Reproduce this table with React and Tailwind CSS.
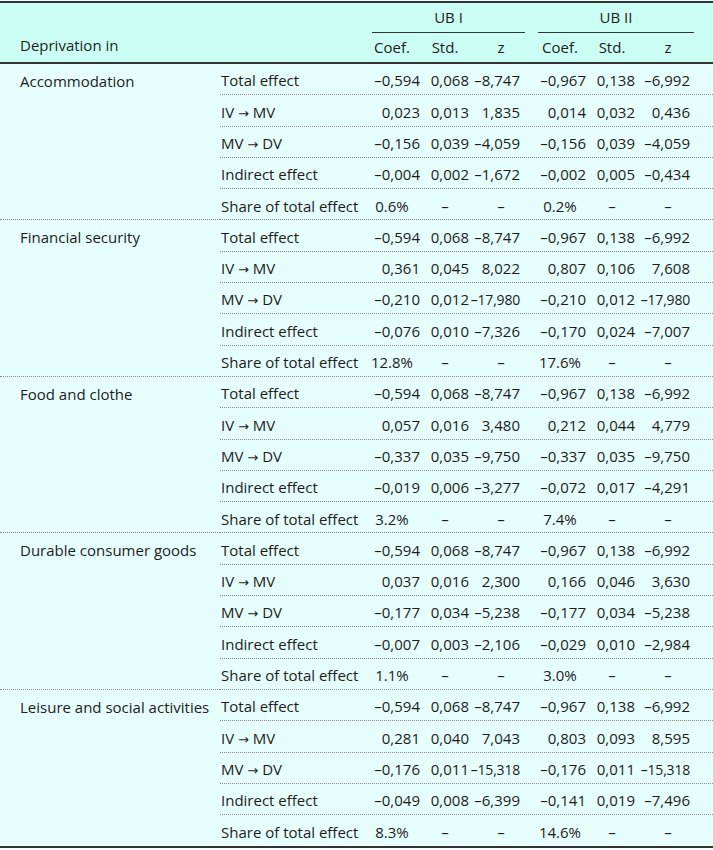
import React from 'react'

const groups = [
  {
    name: 'Accommodation',
    rows: [
      ['–0,594', '0,068', '–8,747', '–0,967', '0,138', '–6,992'],
      ['0,023', '0,013', '1,835', '0,014', '0,032', '0,436'],
      ['–0,156', '0,039', '–4,059', '–0,156', '0,039', '–4,059'],
      ['–0,004', '0,002', '–1,672', '–0,002', '0,005', '–0,434'],
    ],
    share: ['0.6%', '0.2%'],
  },
  {
    name: 'Financial security',
    rows: [
      ['–0,594', '0,068', '–8,747', '–0,967', '0,138', '–6,992'],
      ['0,361', '0,045', '8,022', '0,807', '0,106', '7,608'],
      ['–0,210', '0,012', '–17,980', '–0,210', '0,012', '–17,980'],
      ['–0,076', '0,010', '–7,326', '–0,170', '0,024', '–7,007'],
    ],
    share: ['12.8%', '17.6%'],
  },
  {
    name: 'Food and clothe',
    rows: [
      ['–0,594', '0,068', '–8,747', '–0,967', '0,138', '–6,992'],
      ['0,057', '0,016', '3,480', '0,212', '0,044', '4,779'],
      ['–0,337', '0,035', '–9,750', '–0,337', '0,035', '–9,750'],
      ['–0,019', '0,006', '–3,277', '–0,072', '0,017', '–4,291'],
    ],
    share: ['3.2%', '7.4%'],
  },
  {
    name: 'Durable consumer goods',
    rows: [
      ['–0,594', '0,068', '–8,747', '–0,967', '0,138', '–6,992'],
      ['0,037', '0,016', '2,300', '0,166', '0,046', '3,630'],
      ['–0,177', '0,034', '–5,238', '–0,177', '0,034', '–5,238'],
      ['–0,007', '0,003', '–2,106', '–0,029', '0,010', '–2,984'],
    ],
    share: ['1.1%', '3.0%'],
  },
  {
    name: 'Leisure and social activities',
    rows: [
      ['–0,594', '0,068', '–8,747', '–0,967', '0,138', '–6,992'],
      ['0,281', '0,040', '7,043', '0,803', '0,093', '8,595'],
      ['–0,176', '0,011', '–15,318', '–0,176', '0,011', '–15,318'],
      ['–0,049', '0,008', '–6,399', '–0,141', '0,019', '–7,496'],
    ],
    share: ['8.3%', '14.6%'],
  },
]

const Arrow = () => <span style={{ fontFamily: '"DejaVu Sans", sans-serif' }} className="text-[13px]">→</span>

const labels = [
  'Total effect',
  <>IV <Arrow /> MV</>,
  <>MV <Arrow /> DV</>,
  'Indirect effect',
]

// right padding per numeric column so the digits line up like the reference
const numPad = [
  'text-right whitespace-nowrap',
  'text-right whitespace-nowrap pr-px',
  'text-right whitespace-nowrap pr-[12px]',
  'text-right whitespace-nowrap pr-[2px]',
  'text-right whitespace-nowrap pr-px',
  'text-right whitespace-nowrap pr-[10px]',
]

const grid = 'grid grid-cols-[144px_56px_50px_62px_56px_48px_64px_13px] items-center pt-[3px]'
const rowH = 'h-[31.3px]'
const dotted = 'border-b border-dotted border-[#8c8c8c]'

function Num({ v }) {
  // the widest z values get a touch narrower so they keep clear of the Std column
  if (v.length > 6) return <span className="text-[14px] tracking-[-0.2px]">{v}</span>
  return v
}

function Row({ label, cells, last }) {
  return (
    <div className={`${grid} ${rowH} ${last ? '' : dotted}`}>
      <div className="pl-px whitespace-nowrap">{label}</div>
      {cells.map((c, i) => (
        <div key={i} className={numPad[i]}><Num v={c} /></div>
      ))}
      <div />
    </div>
  )
}

function ShareRow({ share, last }) {
  return (
    <div className={`${grid} ${rowH} ${last ? '' : dotted}`}>
      <div className="pl-px whitespace-nowrap">Share of total effect</div>
      <div className="text-center">{share[0]}</div>
      <div className="text-center">–</div>
      <div className="text-center">–</div>
      <div className="text-center">{share[1]}</div>
      <div className="text-center">–</div>
      <div className="text-center">–</div>
      <div />
    </div>
  )
}

export default function App() {
  return (
    <div className="w-[713px] bg-[#e6fffc] pt-px text-[15px] text-[#1c1c1c]" style={{ fontFamily: '"Open Sans", "Noto Sans", sans-serif' }}>
      <div className="border-t-2 border-b-2 border-[#333] bg-[#ccfff4]">
        <div className="flex">
          <div className="w-[364px] flex items-end pl-5 pb-[6px]">Deprivation in</div>
          <div className="flex-1 grid grid-cols-[56px_50px_62px_56px_48px_64px_13px]">
            <div className="col-span-3 ml-2 mr-[7px] h-[30px] flex items-center justify-center border-b-[1.5px] border-[#333]">UB I</div>
            <div className="col-span-3 ml-[6px] mr-[6px] h-[30px] flex items-center justify-center border-b-[1.5px] border-[#333]">UB II</div>
            <div />
            <div className="h-[29px] flex items-center justify-center">Coef.</div>
            <div className="h-[29px] flex items-center justify-center">Std.</div>
            <div className="h-[29px] flex items-center justify-center">z</div>
            <div className="h-[29px] flex items-center justify-center">Coef.</div>
            <div className="h-[29px] flex items-center justify-center">Std.</div>
            <div className="h-[29px] flex items-center justify-center">z</div>
            <div />
          </div>
        </div>
      </div>
      <div className="border-b-2 border-[#333]">
        {groups.map((g, gi) => {
          const last = gi === groups.length - 1
          return (
            <div key={g.name} className="flex">
              <div className={`w-[220px] ${last ? '' : dotted}`}>
                <div className={`${rowH} flex items-center pl-5 pt-[3px] whitespace-nowrap`}>{g.name}</div>
              </div>
              <div className="flex-1">
                {g.rows.map((r, i) => (
                  <Row key={i} label={labels[i]} cells={r} />
                ))}
                <ShareRow share={g.share} last={last} />
              </div>
            </div>
          )
        })}
      </div>
    </div>
  )
}
